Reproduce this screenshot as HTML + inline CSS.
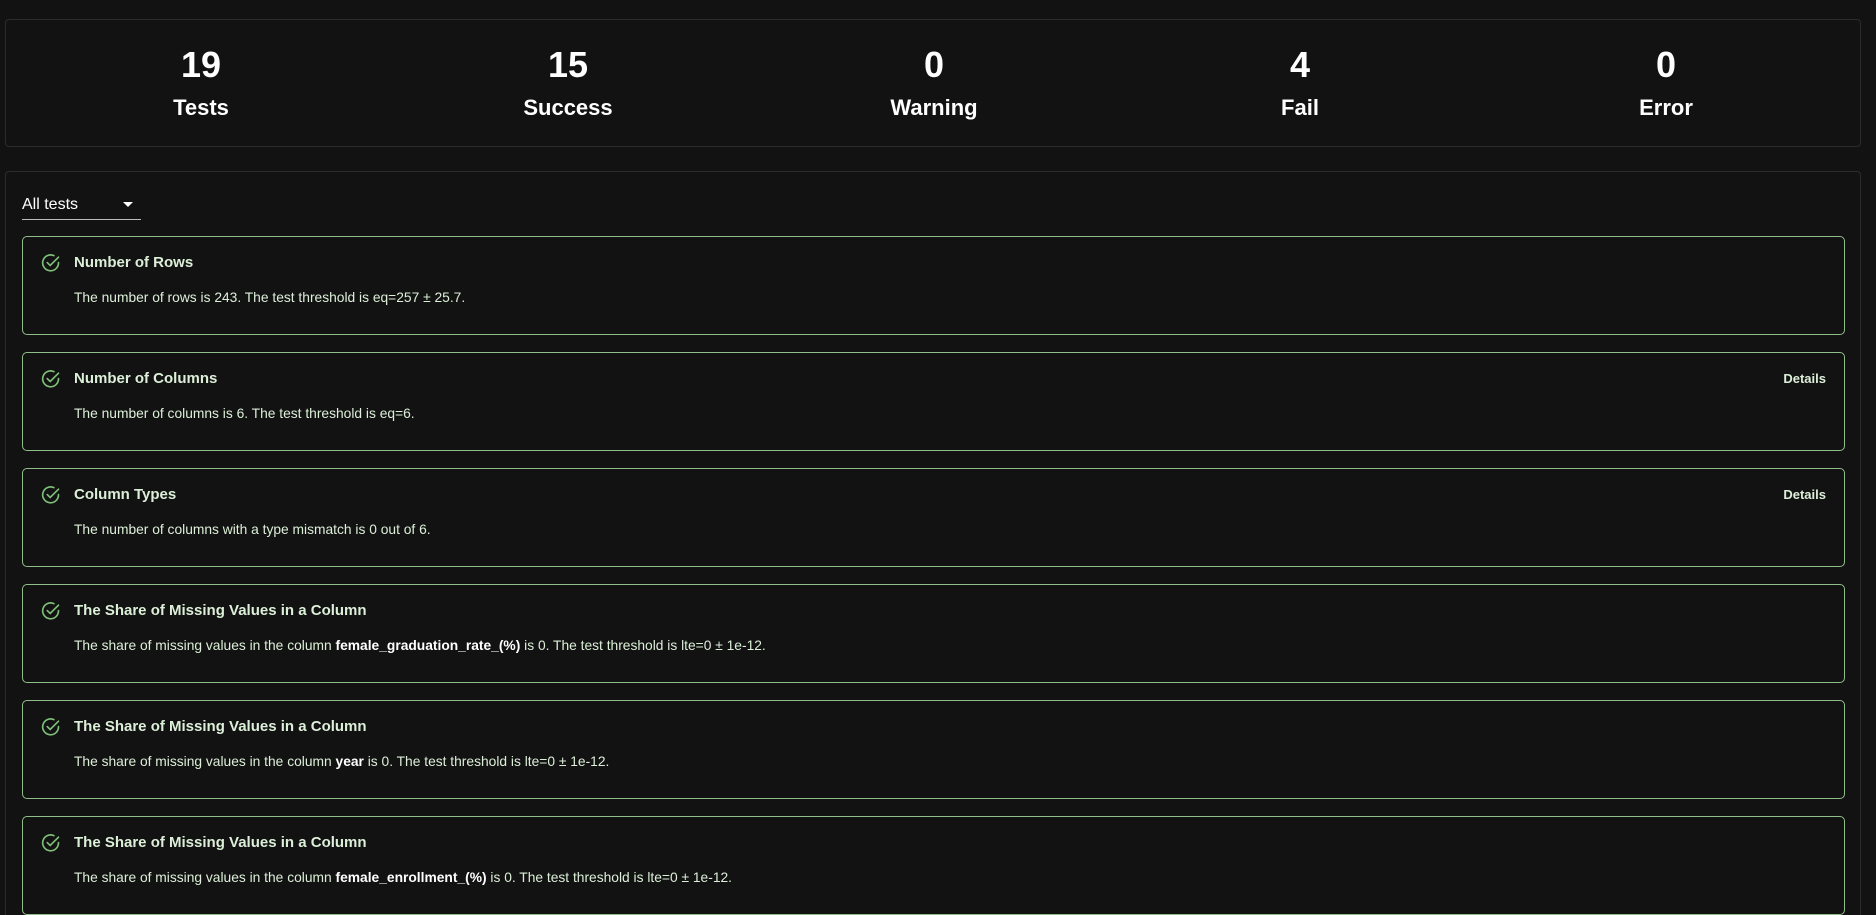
<!DOCTYPE html>
<html><head><meta charset="utf-8"><style>
*{box-sizing:border-box;margin:0;padding:0}
html,body{width:1876px;height:915px;overflow:hidden}
body{background:#121212;font-family:"Liberation Sans",sans-serif;color:#fff;position:relative}
.stats{position:absolute;left:5px;top:19px;width:1856px;height:128px;border:1px solid #2c2c2c;border-radius:4px}
.stat{position:absolute;width:300px;margin-left:-150px;text-align:center;font-weight:bold}
.stat .n{position:absolute;left:0;right:0;top:27px;font-size:36px;line-height:36px}
.stat .l{position:absolute;left:0;right:0;top:75px;font-size:22px;line-height:26px}
.panel{position:absolute;left:5px;top:171px;width:1856px;height:744px;border:1px solid #2c2c2c;border-bottom:none;border-radius:4px 4px 0 0}
.sel{position:absolute;left:22px;top:194px;width:119px;height:26px;border-bottom:1px solid #bbb;font-size:16px;line-height:22px;color:#fff}
.sel:after{content:"";position:absolute;right:8px;top:8px;border-left:5px solid transparent;border-right:5px solid transparent;border-top:5px solid #fff}
.card{position:absolute;left:22px;width:1823px;height:99px;border:1px solid #8fbf88;border-radius:5px}
.card svg{position:absolute;left:18px;top:16px}
.card .t{position:absolute;left:51px;top:16px;font-size:15px;font-weight:bold;color:#dcefd8;line-height:20px}
.card .d{position:absolute;left:51px;top:52px;font-size:13.8px;color:#dcefd8;line-height:18px}
.card .d b{color:#fff}
.card .det{position:absolute;right:18px;top:18px;font-size:13px;font-weight:bold;color:#dcefd8}
</style></head><body>
<div class="stats">
<div class="stat" style="left:195px"><div class="n">19</div><div class="l">Tests</div></div>
<div class="stat" style="left:562px"><div class="n">15</div><div class="l">Success</div></div>
<div class="stat" style="left:928px"><div class="n">0</div><div class="l">Warning</div></div>
<div class="stat" style="left:1294px"><div class="n">4</div><div class="l">Fail</div></div>
<div class="stat" style="left:1660px"><div class="n">0</div><div class="l">Error</div></div>
</div>
<div class="panel"></div>
<div class="sel">All tests</div>

<div class="card" style="top:236px"><svg width="20" height="20" viewBox="0 0 24 24" fill="none" stroke="#7fbf7a" stroke-width="2" stroke-linecap="round"><path d="M21 11.5A9.5 9.5 0 1 1 15.5 3.2"/><path d="M7.5 11.5l3.5 3.5L21 5"/></svg><div class="t">Number of Rows</div><div class="d">The number of rows is 243. The test threshold is eq=257 ± 25.7.</div></div>

<div class="card" style="top:352px"><svg width="20" height="20" viewBox="0 0 24 24" fill="none" stroke="#7fbf7a" stroke-width="2" stroke-linecap="round"><path d="M21 11.5A9.5 9.5 0 1 1 15.5 3.2"/><path d="M7.5 11.5l3.5 3.5L21 5"/></svg><div class="t">Number of Columns</div><div class="det">Details</div><div class="d">The number of columns is 6. The test threshold is eq=6.</div></div>

<div class="card" style="top:468px"><svg width="20" height="20" viewBox="0 0 24 24" fill="none" stroke="#7fbf7a" stroke-width="2" stroke-linecap="round"><path d="M21 11.5A9.5 9.5 0 1 1 15.5 3.2"/><path d="M7.5 11.5l3.5 3.5L21 5"/></svg><div class="t">Column Types</div><div class="det">Details</div><div class="d">The number of columns with a type mismatch is 0 out of 6.</div></div>

<div class="card" style="top:584px"><svg width="20" height="20" viewBox="0 0 24 24" fill="none" stroke="#7fbf7a" stroke-width="2" stroke-linecap="round"><path d="M21 11.5A9.5 9.5 0 1 1 15.5 3.2"/><path d="M7.5 11.5l3.5 3.5L21 5"/></svg><div class="t">The Share of Missing Values in a Column</div><div class="d">The share of missing values in the column <b>female_graduation_rate_(%)</b> is 0. The test threshold is lte=0 ± 1e-12.</div></div>

<div class="card" style="top:700px"><svg width="20" height="20" viewBox="0 0 24 24" fill="none" stroke="#7fbf7a" stroke-width="2" stroke-linecap="round"><path d="M21 11.5A9.5 9.5 0 1 1 15.5 3.2"/><path d="M7.5 11.5l3.5 3.5L21 5"/></svg><div class="t">The Share of Missing Values in a Column</div><div class="d">The share of missing values in the column <b>year</b> is 0. The test threshold is lte=0 ± 1e-12.</div></div>

<div class="card" style="top:816px;height:99px"><svg width="20" height="20" viewBox="0 0 24 24" fill="none" stroke="#7fbf7a" stroke-width="2" stroke-linecap="round"><path d="M21 11.5A9.5 9.5 0 1 1 15.5 3.2"/><path d="M7.5 11.5l3.5 3.5L21 5"/></svg><div class="t">The Share of Missing Values in a Column</div><div class="d">The share of missing values in the column <b>female_enrollment_(%)</b> is 0. The test threshold is lte=0 ± 1e-12.</div></div>
</body></html>
